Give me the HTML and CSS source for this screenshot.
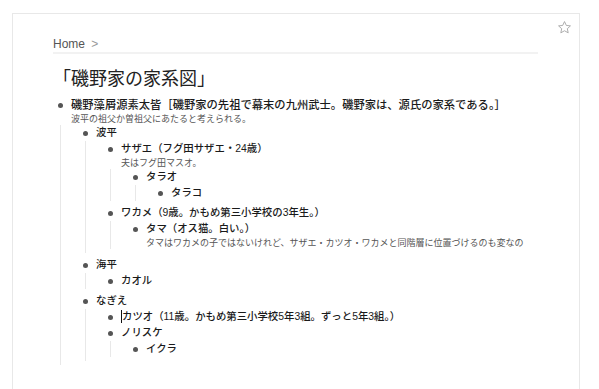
FILE: index.html
```
<!DOCTYPE html>
<html lang="ja">
<head>
  <meta charset="UTF-8">
  <title>「磯野家の家系図」</title>
  <link rel="stylesheet" href="styles.css">
</head>
<body>
  <div class="card">
    <!-- お気に入り -->
    <svg class="star" width="15" height="15" viewBox="0 0 24 24">
      <path d="M12 2.5l2.9 6.2 6.6.7-5 4.5 1.4 6.6L12 17.2l-5.9 3.3 1.4-6.6-5-4.5 6.6-.7z" fill="none" stroke="#a8a8a8" stroke-width="1.5" stroke-linejoin="round"/>
    </svg>

    <div class="crumbs">Home <span class="sep">&gt;</span></div>

    <h1 class="title">「磯野家の家系図」</h1>

    <ul class="tree">
      <li class="branch root">磯野藻屑源素太皆［磯野家の先祖で幕末の九州武士。磯野家は、源氏の家系である。］
        <div class="note">波平の祖父か曽祖父にあたると考えられる。</div>
        <ul>
          <li class="branch">波平
            <ul>
              <li class="branch">サザエ（フグ田サザエ・24歳）
                <div class="note">夫はフグ田マスオ。</div>
                <ul>
                  <li>タラオ
                    <ul>
                      <li>タラコ</li>
                    </ul>
                  </li>
                </ul>
              </li>
              <li class="branch">ワカメ（9歳。かもめ第三小学校の3年生。）
                <ul>
                  <li>タマ（オス猫。白い。）
                    <div class="note">タマはワカメの子ではないけれど、サザエ・カツオ・ワカメと同階層に位置づけるのも変なの</div>
                  </li>
                </ul>
              </li>
            </ul>
          </li>
          <li class="branch">海平
            <ul>
              <li>カオル</li>
            </ul>
          </li>
          <li class="branch">なぎえ
            <ul>
              <li><span class="caret"></span>カツオ（11歳。かもめ第三小学校5年3組。ずっと5年3組。）</li>
              <li class="branch">ノリスケ
                <ul>
                  <li>イクラ</li>
                </ul>
              </li>
            </ul>
          </li>
        </ul>
      </li>
    </ul>
  </div>
</body>
</html>
```

FILE: styles.css
```
body {
  margin: 0;
  padding: 13px 19px 0 12px;
  background: #fff;
  font-family: 'Liberation Sans', 'Noto Sans CJK JP', sans-serif;
  color: #222;
}

/* カード */
.card {
  position: relative;
  box-sizing: border-box;
  min-height: calc(100vh - 13px);
  border: 1px solid #e8e8e8;
  border-bottom: none;
  padding: 23px 41px 0 40px;
}

.star {
  position: absolute;
  top: 6px;
  right: 7px;
}

.crumbs {
  font-size: 12px;
  line-height: 14px;
  color: #555;
  padding-bottom: 1px;
  border-bottom: 2px solid #f2f2f2;
}

.crumbs .sep {
  margin-left: 3px;
  color: #999;
}

.title {
  margin: 11px 0 0 0;
  font-size: 18px;
  line-height: 24px;
  font-weight: normal;
  font-family: 'Noto Sans CJK JP', sans-serif;
  color: #222;
}

/* 家系図ツリー */
.tree,
.tree ul {
  list-style: none;
  margin: 0;
}

.tree {
  margin-top: 8px;
  padding-left: 18px;
}

.tree ul {
  margin-left: -11px;
  padding-left: 35px;
  border-left: 1px solid #e8e8e8;
}

.tree li {
  position: relative;
  font-size: 10.4px;
  line-height: 16px;
  font-weight: 500;
  font-family: 'Liberation Sans', 'Noto Sans CJK JP', sans-serif;
  color: #1a1a1a;
}

.tree li.root {
  font-size: 11.3px;
}

.tree li::before {
  content: '';
  position: absolute;
  left: -13px;
  top: 6px;
  width: 5px;
  height: 5px;
  border-radius: 50%;
  background: #555;
}

.tree li.branch {
  padding-bottom: 4px;
}

.note {
  font-size: 9px;
  line-height: 12px;
  font-weight: normal;
  color: #555;
}

.caret {
  display: inline-block;
  width: 0;
  height: 13px;
  border-left: 1px solid #111;
  vertical-align: -3px;
}
```
